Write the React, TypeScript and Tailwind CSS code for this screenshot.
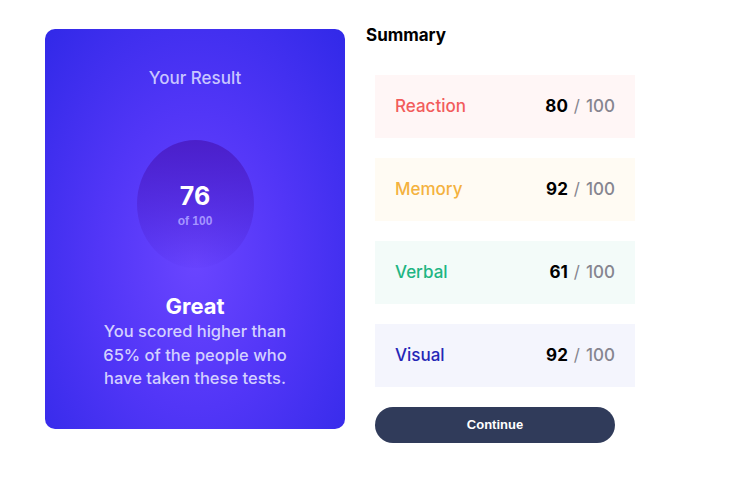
const rows = [
  { label: "Reaction", score: 80, text: "text-[#f25c5c]", bg: "bg-[#fff6f6]" },
  { label: "Memory", score: 92, text: "text-[#f4b23e]", bg: "bg-[#fffbf3]" },
  { label: "Verbal", score: 61, text: "text-[#1eb583]", bg: "bg-[#f3fbf9]" },
  { label: "Visual", score: 92, text: "text-[#2526b6]", bg: "bg-[#f4f5fd]" },
];

export default function App() {
  return (
    <div className="min-h-screen bg-white font-['Inter',sans-serif]">
      <div className="flex pl-[45px] pt-[29px] gap-[21px]">
        <div className="w-[300px] h-[400px] rounded-[10px] bg-[radial-gradient(ellipse_at_50%_58%,#6a45ff_0%,#5236f7_45%,#3129e8_100%)] flex flex-col items-center pt-[37px]">
          <h2 className="text-[17px] leading-[24px] font-medium text-[#c9c6ff]">Your Result</h2>
          <div className="mt-[50px] w-[117px] h-[128px] rounded-[50%] bg-[linear-gradient(180deg,#4b1fca_0%,rgba(92,56,245,0.15)_100%)] flex flex-col items-center justify-center">
            <span className="text-[25px] leading-[30px] font-bold text-white mt-[2px]">76</span>
            <span className="text-[12px] leading-[16px] font-bold text-[#a595ff] font-['Liberation_Sans',sans-serif] mt-[2px]">of 100</span>
          </div>
          <h3 className="mt-[24px] text-[22px] leading-[28px] font-bold text-white">Great</h3>
          <p className="text-[16.5px] leading-[23.5px] font-medium text-[#d3d0ff] text-center whitespace-nowrap">
            You scored higher than
            <br />
            65% of the people who
            <br />
            have taken these tests.
          </p>
        </div>
        <div className="flex flex-col">
          <h2 className="text-[17px] leading-[24px] font-bold text-black mt-[-6px]">Summary</h2>
          <div className="ml-[9px] mt-[28px] flex flex-col gap-[20px]">
            {rows.map((r) => (
              <div key={r.label} className={`w-[260px] h-[63px] ${r.bg} flex items-center justify-between px-[20px]`}>
                <span className={`text-[17px] font-medium ${r.text}`}>{r.label}</span>
                <span className="text-[17px] flex items-center">
                  <span className="font-bold text-black">{r.score}</span>
                  <span className="text-[#85858f] font-normal mx-[6px]">/</span>
                  <span className="text-[#85858f] font-medium">100</span>
                </span>
              </div>
            ))}
            <button className="w-[240px] h-[36px] rounded-full bg-[#303b5a] text-white text-[13px] font-bold font-['Liberation_Sans',sans-serif]">
              Continue
            </button>
          </div>
        </div>
      </div>
    </div>
  );
}
